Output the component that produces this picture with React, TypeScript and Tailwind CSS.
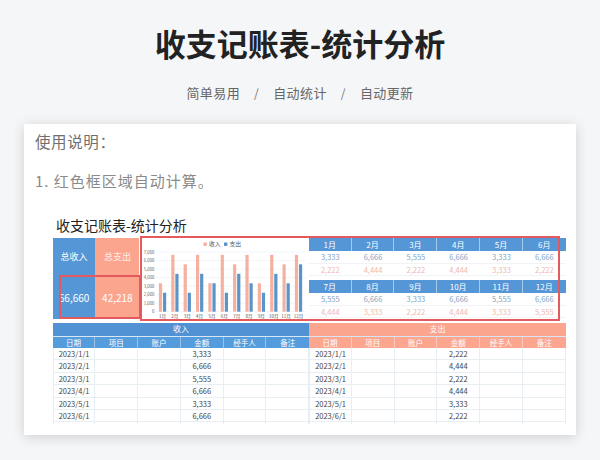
const sans = "font-['Noto_Sans_CJK_SC','Noto_Sans',sans-serif]";

const months = ["1月", "2月", "3月", "4月", "5月", "6月", "7月", "8月", "9月", "10月", "11月", "12月"];
const income = [3333, 6666, 5555, 6666, 3333, 6666, 5555, 6666, 3333, 6666, 5555, 6666];
const expense = [2222, 4444, 2222, 4444, 3333, 2222, 4444, 3333, 2222, 4444, 3333, 5555];
const columns = ["日期", "项目", "账户", "金额", "经手人", "备注"];
const dates = ["2023/1/1", "2023/2/1", "2023/3/1", "2023/4/1", "2023/5/1", "2023/6/1"];
const fmt = (n: number) => n.toLocaleString("en-US");

function Chart() {
  const base = 73.7;
  const unit = 8.53 / 1000;
  return (
    <svg width="169" height="81" viewBox="0 0 169 81" className="block">
      {[0, 1, 2, 3, 4, 5, 6, 7].map((i) => (
        <g key={i}>
          <line x1="16" x2="165" y1={base - i * 8.53} y2={base - i * 8.53} stroke="#eceff2" strokeWidth="0.6" />
          <text x="14.5" y={base - i * 8.53 + 1.6} textAnchor="end" fontSize="4.3" fill="#666">
            {i === 0 ? "0" : `${i},000`}
          </text>
        </g>
      ))}
      <rect x="63.5" y="4.5" width="3.4" height="3.4" fill="#f4b1a0" />
      <text x="69" y="8.4" fontSize="5.8" fill="#555">收入</text>
      <rect x="84" y="4.5" width="3.4" height="3.4" fill="#5b94c8" />
      <text x="89.5" y="8.4" fontSize="5.8" fill="#555">支出</text>
      {months.map((m, i) => {
        const c = 22.5 + i * 12.36;
        return (
          <g key={m}>
            <rect x={c - 3.6} y={base - income[i] * unit} width="3.2" height={income[i] * unit} fill="#f4b1a0" />
            <rect x={c + 0.5} y={base - expense[i] * unit} width="3.2" height={expense[i] * unit} fill="#5b94c8" />
            <text x={c} y="80" textAnchor="middle" fontSize="4.5" fill="#555">{m}</text>
          </g>
        );
      })}
    </svg>
  );
}

function MonthTable({ from }: { from: number }) {
  const idx = [0, 1, 2, 3, 4, 5].map((i) => i + from);
  return (
    <div className="text-[7.5px]">
      <div className="grid grid-cols-6 h-[13px] bg-[#5596d6] text-white">
        {idx.map((i) => (
          <div key={i} className="flex items-center justify-center border-r border-[#a9cbea] last:border-r-0 text-[8px]">{months[i]}</div>
        ))}
      </div>
      <div className="grid grid-cols-6 h-[12.5px] border-b border-[#f1f3f5] text-[#86a5c4]">
        {idx.map((i) => (
          <div key={i} className="flex items-center justify-center">{fmt(income[i])}</div>
        ))}
      </div>
      <div className="grid grid-cols-6 h-[12.5px] border-b border-[#f1f3f5] text-[#edb9ad]">
        {idx.map((i) => (
          <div key={i} className="flex items-center justify-center">{fmt(expense[i])}</div>
        ))}
      </div>
    </div>
  );
}

function Ledger({ title, values, head, sub }: { title: string; values: number[]; head: string; sub: string }) {
  return (
    <div className="flex-1 min-w-0">
      <div className={`h-[12.5px] flex items-center justify-center text-[8px] text-white ${head}`}>{title}</div>
      <div className={`grid grid-cols-6 h-[12.5px] text-white text-[7.5px] border-t border-[#d6e6f4] ${sub}`}>
        {columns.map((c) => (
          <div key={c} className="flex items-center justify-center border-r border-white/40 last:border-r-0">{c}</div>
        ))}
      </div>
      {dates.map((d, r) => (
        <div key={d} className="grid grid-cols-6 h-[12.4px] text-[7.5px] text-[#444] border-b border-[#e8eff3]">
          {[d, "", "", fmt(values[r]), "", ""].map((v, i) => (
            <div key={i} className="flex items-center justify-center border-r border-l-0 border-[#e8eff3] first:border-l">{v}</div>
          ))}
        </div>
      ))}
      <div className="grid grid-cols-6 h-[2px]">
        {columns.map((c) => (
          <div key={c} className="border-r border-[#e8eff3] first:border-l" />
        ))}
      </div>
    </div>
  );
}

export default function App() {
  return (
    <div className={`h-[460px] w-[600px] overflow-hidden bg-[#f5f6f8] flex flex-col items-center ${sans}`}>
      <h1 className="mt-[20px] h-[46px] leading-[46px] text-[31px] font-bold text-[#222]">收支记账表-统计分析</h1>
      <div className="mt-[16px] h-[22px] flex items-center text-[13px] tracking-[0.4px] text-[#666]">
        <span>简单易用</span>
        <span className="mx-[14px] text-[#777] text-[12px]">/</span>
        <span>自动统计</span>
        <span className="mx-[14px] text-[#777] text-[12px]">/</span>
        <span>自动更新</span>
      </div>
      <div className="mt-[20px] w-[552px] h-[311px] bg-white shadow-[0_2px_12px_rgba(0,0,0,0.16)] overflow-hidden">
        <p className="ml-[11px] mt-[6px] h-[22px] leading-[22px] text-[15.5px] tracking-[0.6px] text-[#6f6f6f]">使用说明：</p>
        <p className="ml-[11px] mt-[18px] h-[22px] leading-[22px] text-[15px] tracking-[1px] text-[#8a8a8a]">1. 红色框区域自动计算。</p>
        <p className="ml-[32px] mt-[23px] h-[20px] leading-[20px] text-[14px] text-[#222]">收支记账表-统计分析</p>
        <div className="relative ml-[28.7px] mt-[3px] w-[513px]">
          <div className="flex h-[81px]">
            <div className="w-[42.8px] bg-[#5596d6] flex flex-col items-center text-white">
              <div className="h-[38px] flex items-center text-[9px]">总收入</div>
              <div className="flex-1 flex items-center text-[10px]">66,660</div>
            </div>
            <div className="w-[43.8px] bg-[#fba58f] flex flex-col items-center text-white">
              <div className="h-[38px] flex items-center text-[9px] text-white/80">总支出</div>
              <div className="flex-1 flex items-center text-[10px]">42,218</div>
            </div>
            <div className="w-[169.6px] pl-[0.6px]"><Chart /></div>
            <div className="flex-1 flex flex-col gap-[4px]">
              <MonthTable from={0} />
              <MonthTable from={6} />
            </div>
          </div>
          <div className="mt-[4px] flex">
            <Ledger title="收入" values={income} head="bg-[#5092d3]" sub="bg-[#559cdc]" />
            <Ledger title="支出" values={expense} head="bg-[#fba58f]" sub="bg-[#fca68f]" />
          </div>
          <div className="absolute left-[6px] top-[37px] w-[82px] h-[44px] border-2 border-[#e4595e]" />
          <div className="absolute left-[87px] top-[-2px] w-[420px] h-[85px] border-2 border-[#e4595e]" />
        </div>
      </div>
    </div>
  );
}
